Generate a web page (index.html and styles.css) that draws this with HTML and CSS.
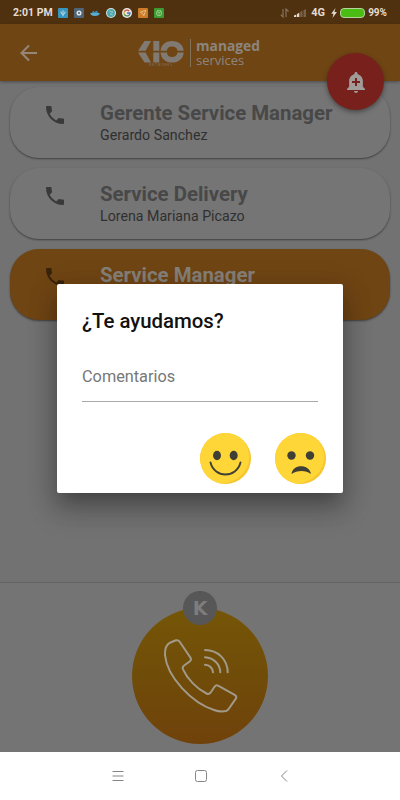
FILE: index.html
```html
<!DOCTYPE html>
<html lang="es">
<head>
<meta charset="utf-8">
<title>Managed Services</title>
<link rel="stylesheet" href="styles.css">
</head>
<body>
<svg class="defs" width="0" height="0">
  <symbol id="call" viewBox="0 0 24 24"><path d="M6.62 10.79c1.44 2.83 3.76 5.14 6.59 6.59l2.2-2.2c.27-.27.67-.36 1.02-.24 1.12.37 2.33.57 3.57.57.55 0 1 .45 1 1V20c0 .55-.45 1-1 1C10.61 21 3 13.39 3 4c0-.55.45-1 1-1h3.5c.55 0 1 .45 1 1 0 1.25.2 2.45.57 3.57.11.35.03.74-.25 1.02z"/></symbol>
</svg>
<div class="screen">
  <header class="status">
    <span class="clock">2:01 PM</span>
    <div class="notices">
      <svg viewBox="0 0 10 10"><rect width="10" height="10" rx="1" fill="#3795be"/><path d="M5 8.2V2.2M3 3.5v1.6l2 1.5 2-1.5V3.5" fill="none" stroke="#b9dbe6" stroke-width="1"/></svg>
      <svg viewBox="0 0 10 10"><rect width="10" height="10" rx="1" fill="#4e6577"/><circle cx="5" cy="5" r="1.8" fill="none" stroke="#e0e4e6" stroke-width="1.5"/></svg>
      <svg viewBox="0 0 10 10"><path d="M.2 5h9.6C9.500 7 8 8 5 8S.5 7 .2 5z" fill="#58add2"/><path d="M2 5l1-2.500 1.500 1.600L7 2.500 8 5z" fill="#3d8db2"/></svg>
      <svg viewBox="0 0 10 10"><circle cx="5" cy="5" r="5" fill="#d5e2df"/><circle cx="5" cy="5" r="3.900" fill="#4aa5ad"/><path d="M3 3l4 1-3 2 3 1" fill="none" stroke="#86c9c8"/></svg>
      <svg viewBox="0 0 10 10"><circle cx="5" cy="5" r="5" fill="#e9e6e3"/><g fill="none" stroke-width="1.300"><path d="M7.200 3A3 3 0 0 0 2.400 3.600" stroke="#c9503d"/><path d="M2.400 3.600a3 3 0 0 0 0 2.800" stroke="#d9a437"/><path d="M2.400 6.400A3 3 0 0 0 7 7.200" stroke="#429458"/><path d="M7 7.200A3 3 0 0 0 8 5H5" stroke="#4772b8"/></g></svg>
      <svg viewBox="0 0 10 10"><rect width="10" height="10" rx="1" fill="#cc7c26"/><path d="M2.300 4.200l5.500-2-2 5.500-1.200-2.300z" fill="none" stroke="#e7c397" stroke-width=".9"/></svg>
      <svg viewBox="0 0 10 10"><rect width="10" height="10" rx="1" fill="#3c9b31"/><circle cx="5" cy="5.200" r="2.600" fill="none" stroke="#9bd08c" stroke-width="1"/><path d="M3.500 4.600h3M5 4v3M3 2l1 1M7 2L6 3" stroke="#9bd08c" stroke-width=".8"/></svg>
    </div>
    <div class="signals">
      <svg class="transfer" width="10" height="10" viewBox="0 0 10 10"><path d="M3 1v8L.8 6.600M6 9V1l2.500 2.500" fill="none" stroke="#8b7761" stroke-width="1.100"/></svg>
      <svg class="bars" width="13" height="10" viewBox="0 0 13 10"><path d="M0 9V7.500L2.300 6.500V9zM3 9V6l2.300-1.200V9z" fill="#e4dcd3"/><path d="M6.300 9V3.800L8.500 2.700V9zM9.500 9V2.200L12 1v8z" fill="#7a6149"/></svg>
      <span class="network">4G</span>
      <svg class="bolt" width="6" height="10" viewBox="0 0 6 10"><path d="M4.500 0L.2 5.800h2.300L1.500 10 5.900 4H3.400z" fill="#e4dcd3"/></svg>
      <span class="battery"></span>
      <span class="percent">99%</span>
    </div>
  </header>

  <div class="appbar">
    <svg class="back" width="24" height="24" viewBox="0 0 24 24"><path d="M20 12H5M12 4.500L4.500 12l7.500 7.500" fill="none" stroke="#94877a" stroke-width="2"/></svg>
    <div class="brand">
      <div class="kio">
        <svg width="46" height="22" viewBox="0 0 46 22" fill="#807a73"><path d="M6.500 0H13L7.600 9.800H0zM0 11.400h7.600L13 21.500H6.500z"/><path d="M15.300 0h6v9.800h-6zM15.300 11.400h6v10.100h-6z"/><path d="M22.600 9.800C23 3.800 27.600 0 34 0s11.300 3.800 11.700 9.800h-6.200C39 7 37 5.600 34 5.600S29.300 7 28.900 9.800zM22.600 11.400h6.300c.4 3 2.200 4.500 5.100 4.500s5-1.500 5.500-4.500h6.200c-.4 6.100-5.200 10.100-11.700 10.100s-11-4-11.400-10.100z"/></svg>
        <span class="kio-sub">NETWORKS</span>
      </div>
      <div class="brand-text"><strong>managed</strong><span>services</span></div>
    </div>
    <div class="alert"><svg width="24" height="24" viewBox="0 0 24 24" fill="#a09c99"><path d="M10.010 21.010c0 1.100.890 1.990 1.990 1.990s1.990-.890 1.990-1.990h-3.980zM18.880 16.820V11c0-3.250-2.250-5.970-5.290-6.690v-.720C13.590 2.710 12.880 2 12 2s-1.590.710-1.590 1.590v.720C7.370 5.030 5.120 7.750 5.120 11v5.820L3 18.940V20h18v-1.060l-2.120-2.120zM16 13.010h-3v3h-2v-3H8V11h3V8h2v3h3v2.010z"/></svg></div>
  </div>

  <main class="list">
    <article class="card"><svg class="phone"><use href="#call"/></svg><div><h2>Gerente Service Manager</h2><p>Gerardo Sanchez</p></div></article>
    <article class="card"><svg class="phone"><use href="#call"/></svg><div><h2>Service Delivery</h2><p>Lorena Mariana Picazo</p></div></article>
    <article class="card active"><svg class="phone"><use href="#call"/></svg><div><h2>Service Manager</h2></div></article>
  </main>

  <footer class="dial">
    <div class="call-button">
      <span class="k">K</span>
      <svg width="136" height="136" viewBox="0 0 136 136" fill="none" stroke="#a29a88" stroke-width="2" stroke-linecap="round" stroke-linejoin="round"><path d="M38 34.700l6-2.400q2.200-.6 3.500 1.200L58.700 50q.9 1.800-.7 3.200l-6.200 4.600q-1.700 1.200-.8 3.500c4.500 10 14 19.500 23.500 24.200q2.500 1.200 4-.8l4-5.900q1.700-2.300 4-1l16.200 9q2.300 1.300 1.300 3.600L97 100.500q-1 1.800-3 2.500-5.500 1.300-12-1C60 95 35 69 33 47q-.3-9.500 5-12.300z"/><path d="M73 42C86 42 95.500 51.500 95.700 64.300M73 49.300C82 50 88 56 88.300 64.300M73 56.700c4.700.3 7.500 3.300 8 7.600"/></svg>
    </div>
  </footer>

  <nav class="navbar">
    <svg viewBox="0 0 14 14"><path d="M1.500 2.500h11M1.500 7h11M1.500 11.500h11"/></svg>
    <svg viewBox="0 0 14 14"><rect x="1.500" y="1.500" width="11" height="11" rx="2"/></svg>
    <svg viewBox="0 0 14 14"><path d="M10 1.500L4.500 7l5.500 5.500"/></svg>
  </nav>

  <section class="dialog">
    <h1>¿Te ayudamos?</h1>
    <div class="field">Comentarios</div>
    <div class="faces">
      <svg viewBox="0 0 51 51"><circle cx="25.500" cy="25.500" r="25.500" fill="#f7c52f"/><path d="M40.500 4.800A25.500 25.500 0 1 0 23 50.900C51 46 56 19 40.500 4.800z" fill="#fed638"/><ellipse cx="17" cy="22.500" rx="4" ry="4.700" fill="#403f35"/><ellipse cx="33.700" cy="22.500" rx="4" ry="4.700" fill="#403f35"/><path d="M10.500 29.500c4 16 26 16 30 0" fill="none" stroke="#403f35" stroke-width="1.900" stroke-linecap="round"/></svg>
      <svg viewBox="0 0 51 51"><circle cx="25.500" cy="25.500" r="25.500" fill="#f7c52f"/><path d="M40.500 4.800A25.500 25.500 0 1 0 23 50.900C51 46 56 19 40.500 4.800z" fill="#fed638"/><circle cx="16.500" cy="22.500" r="4.200" fill="#403f35"/><circle cx="35" cy="22.500" r="4.200" fill="#403f35"/><path d="M16.500 41c1-10.500 18-10.500 19.500 0-5-4-14-4-19.500 0z" fill="#403f35"/></svg>
    </div>
  </section>
</div>
</body>
</html>
```
FILE: styles.css
```css
* { box-sizing: border-box; margin: 0; }
body { font-family: Roboto, sans-serif; background: #fff; }
.defs { position: absolute; }
.screen {
  position: relative;
  width: 400px;
  height: 800px;
  overflow: hidden;
  display: flex;
  flex-direction: column;
  background: #727272;
}
.status {
  height: 24px;
  flex: none;
  display: flex;
  align-items: center;
  justify-content: space-between;
  padding: 1px 13px 0;
  background: #50310f;
  color: #e4dcd3;
  font-size: 10.5px;
  font-weight: 700;
}
.clock { width: 45px; white-space: nowrap; }
.notices { display: flex; gap: 6px; flex: 1; }
.notices svg { width: 10px; height: 10px; }
.signals { display: flex; align-items: center; }
.bars { margin: 0 4px 0 4px; }
.network { font-size: 11px; }
.bolt { margin: 0 3px 0 6px; }
.battery {
  width: 25px;
  height: 10px;
  margin-right: 3px;
  border: 1px solid #b5d29b;
  border-radius: 4px;
  background: #4abd14;
}
.percent { font-size: 10px; }
.appbar {
  height: 57px;
  flex: none;
  display: flex;
  align-items: center;
  padding-left: 17px;
  background: #704514;
  box-shadow: 0 1px 3px rgba(0, 0, 0, .35);
}
.brand { display: flex; margin-left: 97px; }
.kio { width: 53px; padding-top: 2px; border-right: 1px solid #807259; height: 28px; }
.kio svg { display: block; }
.kio-sub {
  display: block;
  width: 46px;
  text-align: center;
  font-size: 3px;
  line-height: 5px;
  letter-spacing: 1px;
  color: #807a73;
}
.brand-text {
  padding-left: 5px;
  font-family: "Open Sans", sans-serif;
  color: #8b857e;
}
.brand-text strong, .brand-text span { display: block; font-size: 13px; line-height: 14px; }
.brand-text strong { font-size: 13.800px; }
.alert {
  position: absolute;
  left: 327px;
  top: 53px;
  width: 57px;
  height: 57px;
  border-radius: 50%;
  display: grid;
  place-items: center;
  background: #78211c;
  box-shadow: 0 2px 5px rgba(0, 0, 0, .4);
}
.list { padding: 6px 10px 0; display: grid; gap: 10.500px; }
.card {
  height: 70.700px;
  border-radius: 29px;
  padding: 13px 0 0 33px;
  display: flex;
  gap: 33px;
  background: #757575;
  color: #303030;
  box-shadow: 0 1px 2px rgba(0, 0, 0, .45);
}
.phone { width: 24px; height: 24px; margin-top: 3px; fill: #393939; }
.card h2 {
  font-size: 20.400px;
  line-height: 26px;
  font-weight: 700;
  color: #484848;
  white-space: nowrap;
}
.card p { font-size: 14.200px; line-height: 18px; white-space: nowrap; }
.card.active { background: #704514; }
.active h2 { color: #858079; }
.active .phone { fill: #38230c; }
.dial {
  margin-top: auto;
  height: 170px;
  flex: none;
  border-top: 1px solid #636363;
  padding-top: 25px;
  display: flex;
  justify-content: center;
  background: #747474;
}
.call-button {
  position: relative;
  width: 136px;
  height: 136px;
  border-radius: 50%;
  background: linear-gradient(#755607, #704c09 50%, #70420b);
}
.k {
  position: absolute;
  left: 51px;
  top: -17px;
  width: 34px;
  height: 34px;
  border-radius: 50%;
  background: #575757;
  color: #7d7d7d;
  font: 700 19px/34px "DejaVu Sans", sans-serif;
  text-align: center;
}
.navbar {
  height: 48px;
  flex: none;
  display: flex;
  justify-content: center;
  align-items: center;
  gap: 69px;
  padding-left: 2px;
  background: #fff;
}
.navbar svg { width: 14px; height: 14px; fill: none; stroke: #858585; stroke-width: 1; }
.dialog {
  position: absolute;
  left: 57px;
  top: 284px;
  width: 286px;
  height: 209px;
  padding: 24px 17px 0 25px;
  border-radius: 2px;
  background: #fff;
  color: #111;
  box-shadow: 0 11px 15px -7px rgba(0, 0, 0, .2), 0 16px 28px 3px rgba(0, 0, 0, .2), 0 6px 28px 4px rgba(0, 0, 0, .12);
}
.dialog h1 { font-size: 20.400px; line-height: 26px; font-weight: 500; }
.field {
  width: 236px;
  height: 51px;
  margin-top: 17px;
  padding-top: 15px;
  border-bottom: 1px solid #aaa;
  color: #777;
  font-size: 16.300px;
  line-height: 22px;
}
.faces { display: flex; justify-content: flex-end; gap: 24px; margin-top: 31px; }
.faces svg { width: 51px; height: 51px; }
```
